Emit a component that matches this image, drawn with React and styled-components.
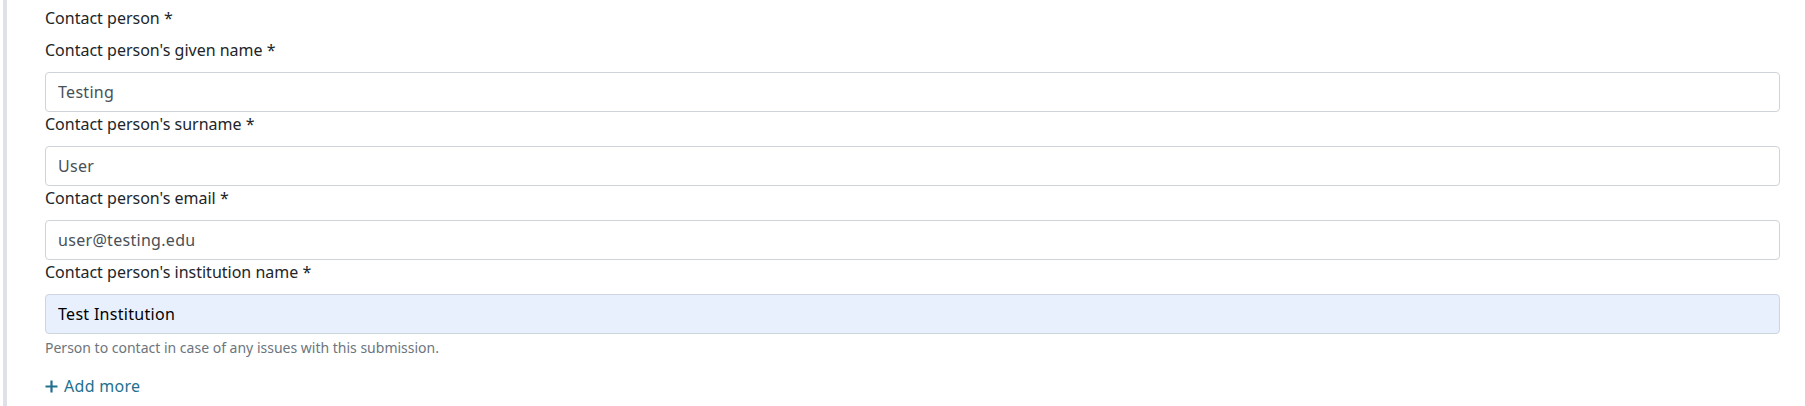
import styled, { createGlobalStyle } from "styled-components";

const GlobalStyle = createGlobalStyle`
  body {
    margin: 0;
    background: #fff;
    font-family: "Noto Sans", "Liberation Sans", sans-serif;
    color: #212529;
  }
`;

const Section = styled.section`
  margin-left: 3px;
  border-left: 4px solid #dee2e6;
  padding: 6px 25px 8px 38px;
  min-height: 392px;
`;

const Legend = styled.div`
  font-size: 16px;
  line-height: 24px;
  margin-bottom: 8px;
`;

const Field = styled.div`
  display: flex;
  flex-direction: column;
`;

const Label = styled.label`
  font-size: 16px;
  line-height: 24px;
  margin-bottom: 10px;
`;

const Input = styled.input`
  box-sizing: border-box;
  height: 40px;
  width: 100%;
  padding: 0 12px;
  font-family: inherit;
  font-size: 16px;
  letter-spacing: 0.3px;
  color: ${({ $autofill }) => ($autofill ? "#000" : "#495057")};
  background: ${({ $autofill }) => ($autofill ? "#e8f0fe" : "#fff")};
  border: 1px solid ${({ $autofill }) => ($autofill ? "#cdd5de" : "#ced4da")};
  border-radius: 4px;
  outline: none;
`;

const Help = styled.div`
  margin-top: 4px;
  font-size: 14px;
  line-height: 20px;
  color: #6c757d;
`;

const AddMore = styled.button`
  margin-top: 16px;
  display: inline-flex;
  align-items: center;
  gap: 6px;
  padding: 0;
  border: 0;
  background: none;
  font-family: inherit;
  font-size: 16px;
  letter-spacing: 0.3px;
  line-height: 24px;
  color: #23708e;
  cursor: pointer;
`;

const fields = [
  { label: "Contact person's given name *", value: "Testing" },
  { label: "Contact person's surname *", value: "User" },
  { label: "Contact person's email *", value: "user@testing.edu" },
  {
    label: "Contact person's institution name *",
    value: "Test Institution",
    autofill: true
  }
];

const PlusIcon = () => (
  <svg width="13" height="13" viewBox="0 0 13 13" aria-hidden="true">
    <path d="M6.5 0.5v12M0.5 6.5h12" stroke="currentColor" strokeWidth="2.2" />
  </svg>
);

export default function App() {
  return (
    <>
      <GlobalStyle />
      <Section>
        <Legend>Contact person *</Legend>
        {fields.map((f) => (
          <Field key={f.label}>
            <Label>{f.label}</Label>
            <Input defaultValue={f.value} $autofill={f.autofill} readOnly />
          </Field>
        ))}
        <Help>Person to contact in case of any issues with this submission.</Help>
        <AddMore type="button">
          <PlusIcon />
          Add more
        </AddMore>
      </Section>
    </>
  );
}
